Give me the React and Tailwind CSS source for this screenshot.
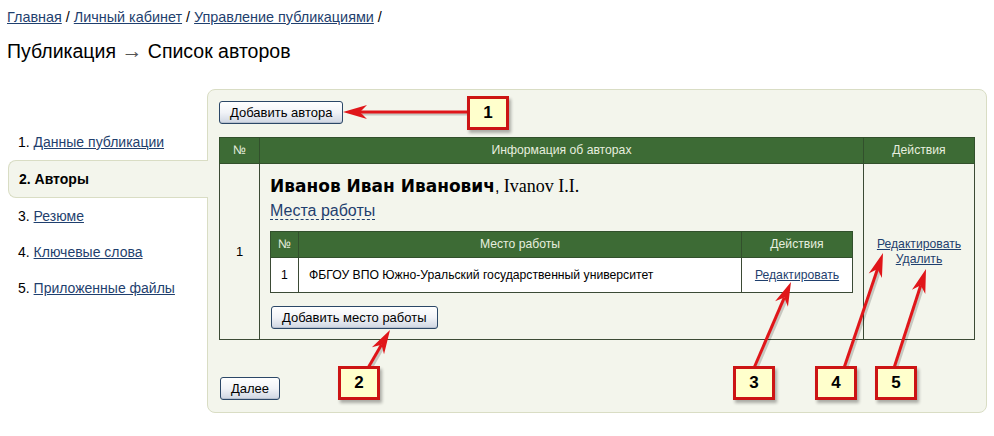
import React from 'react';

const arrows = [
    { from: [470, 112], to: [343, 112] },
    { from: [368, 368], to: [390, 330] },
    { from: [754, 368], to: [791, 282] },
    { from: [844, 368], to: [883, 253] },
    { from: [894, 368], to: [926, 269] },
];

const callouts = [
    { n: 1, x: 467, y: 96 },
    { n: 2, x: 338, y: 366 },
    { n: 3, x: 733, y: 366 },
    { n: 4, x: 815, y: 366 },
    { n: 5, x: 875, y: 366 },
];

// arrow with a notched head, computed from start and tip
const Arrow = ({ from, to }) => {
    const [x1, y1] = from;
    const [x2, y2] = to;
    const len = Math.hypot(x2 - x1, y2 - y1);
    const ux = (x2 - x1) / len;
    const uy = (y2 - y1) / len;
    const px = -uy;
    const py = ux;
    const head = 24;
    const half = 7;
    const notch = 17;
    const bx = x2 - ux * head;
    const by = y2 - uy * head;
    const nx = x2 - ux * notch;
    const ny = y2 - uy * notch;
    const pts = [
        [x2, y2],
        [bx + px * half, by + py * half],
        [nx, ny],
        [bx - px * half, by - py * half],
    ].map((p) => p.join(',')).join(' ');
    return (
        <g>
            <line x1={x1 + 2} y1={y1 + 2} x2={nx + 2} y2={ny + 2} stroke="rgba(0,0,0,0.18)" strokeWidth="3" />
            <line x1={x1} y1={y1} x2={nx} y2={ny} stroke="#e0161a" strokeWidth="3" />
            <polygon points={pts} fill="#e0161a" />
        </g>
    );
};

const Button = ({ children, className = '' }) => (
    <button className={`block h-[23px] px-[10px] rounded-[3px] border border-[#2b4767] bg-gradient-to-b from-white via-[#f1f3f7] to-[#cfd6e2] text-[13px] leading-[21px] text-black shadow-[inset_0_-1px_0_#b7c0ce] ${className}`}>
        {children}
    </button>
);

const navItems = [
    { n: 1, label: 'Данные публикации' },
    { n: 2, label: 'Авторы', active: true },
    { n: 3, label: 'Резюме' },
    { n: 4, label: 'Ключевые слова' },
    { n: 5, label: 'Приложенные файлы' },
];

const App = () => {
    return (
        <div className="relative w-[994px] h-[436px] bg-white overflow-hidden font-['Liberation_Sans',Arial,sans-serif] text-black">
            {/* Breadcrumb */}
            <div className="pl-[7px] pt-[8px] text-[14.4px] leading-[18px]">
                <a className="text-[#1f3f6e] underline" href="#">Главная</a> / <a className="text-[#1f3f6e] underline" href="#">Личный кабинет</a> / <a className="text-[#1f3f6e] underline" href="#">Управление публикациями</a> /
            </div>
            <h1 className="pl-[7px] mt-[14px] text-[19.5px] leading-[22px]">
                Публикация <span className="text-[#555] text-[21px]">→</span> Список авторов
            </h1>

            <div className="flex mt-[27px]">
                {/* Left nav */}
                <div className="w-[207px] pt-[35px] relative z-10 text-[14px]">
                    {navItems.map((item) =>
                        item.active ? (
                            <div key={item.n} className="ml-[8px] mr-[-1px] h-[38px] flex items-center pl-[10px] bg-[#f3f5ec] border border-r-0 border-[#d9ddc4] rounded-l-[8px] font-bold">
                                {item.n}. {item.label}
                            </div>
                        ) : (
                            <div key={item.n} className="h-[36px] flex items-center pl-[18px]">
                                {item.n}.&nbsp;<a href="#" className="text-[#1f3f6e] underline">{item.label}</a>
                            </div>
                        )
                    )}
                </div>

                {/* Panel */}
                <div className="w-[780px] h-[324px] bg-[#f3f5ec] border border-[#d9ddc4] rounded-[8px] pl-[11px] pr-[11px] pt-[11px]">
                    <Button>Добавить автора</Button>

                    <table className="mt-[13px] w-[756px] border-collapse text-[12.2px]">
                        <thead>
                            <tr className="bg-[#3d6b35] text-[#e6eedf] h-[26px]">
                                <th className="w-[40px] font-normal border border-[#32502c]">№</th>
                                <th className="font-normal border border-[#32502c]">Информация об авторах</th>
                                <th className="w-[111px] font-normal border border-[#32502c]">Действия</th>
                            </tr>
                        </thead>
                        <tbody>
                            <tr>
                                <td className="border border-[#3b4a35] text-center align-middle text-[13px]">1</td>
                                <td className="border border-[#3b4a35] px-[10px] pt-[12px] pb-[10px] align-top">
                                    <div className="leading-[20px] whitespace-nowrap">
                                        <span className="font-['DejaVu_Sans',Verdana,sans-serif] font-bold text-[17px]">Иванов Иван Иванович</span>
                                        <span className="text-[16px]">, </span>
                                        <span className="font-['Liberation_Serif',serif] text-[18px]">Ivanov I.I.</span>
                                    </div>
                                    <div className="mt-[3px] leading-[20px]">
                                        <a href="#" className="text-[16px] text-[#1f3f6e] border-b border-dashed border-[#1f3f6e]">Места работы</a>
                                    </div>
                                    <table className="mt-[9px] w-full border-collapse text-[12.2px]">
                                        <thead>
                                            <tr className="bg-[#3d6b35] text-[#e6eedf] h-[26px]">
                                                <th className="w-[28px] font-normal border border-[#32502c]">№</th>
                                                <th className="font-normal border border-[#32502c]">Место работы</th>
                                                <th className="w-[111px] font-normal border border-[#32502c]">Действия</th>
                                            </tr>
                                        </thead>
                                        <tbody>
                                            <tr className="bg-white h-[35px]">
                                                <td className="border border-[#3b4a35] text-center">1</td>
                                                <td className="border border-[#3b4a35] pl-[10px]">ФБГОУ ВПО Южно-Уральский государственный университет</td>
                                                <td className="border border-[#3b4a35] text-center">
                                                    <a href="#" className="text-[#1f3f6e] underline">Редактировать</a>
                                                </td>
                                            </tr>
                                        </tbody>
                                    </table>
                                    <Button className="mt-[13px] ml-[1px]">Добавить место работы</Button>
                                </td>
                                <td className="border border-[#3b4a35] text-center align-middle leading-[15px]">
                                    <a href="#" className="text-[#1f3f6e] underline">Редактировать</a>
                                    <br />
                                    <a href="#" className="text-[#1f3f6e] underline">Удалить</a>
                                </td>
                            </tr>
                        </tbody>
                    </table>

                    <Button className="mt-[37px] ml-[1px] px-[9px] h-[22px]">Далее</Button>
                </div>
            </div>

            {/* Annotation overlay */}
            <svg className="absolute inset-0 pointer-events-none" width="994" height="436">
                {arrows.map((a, i) => (
                    <Arrow key={i} from={a.from} to={a.to} />
                ))}
            </svg>
            {callouts.map((c) => (
                <div
                    key={c.n}
                    className="absolute w-[42px] h-[34px] flex items-center justify-center bg-[#ffffcc] border-[3px] border-[#cc1414] shadow-[2px_3px_3px_rgba(0,0,0,0.3)] font-bold text-[17px]"
                    style={{ left: c.x, top: c.y }}
                >
                    {c.n}
                </div>
            ))}
        </div>
    );
};

export default App;
